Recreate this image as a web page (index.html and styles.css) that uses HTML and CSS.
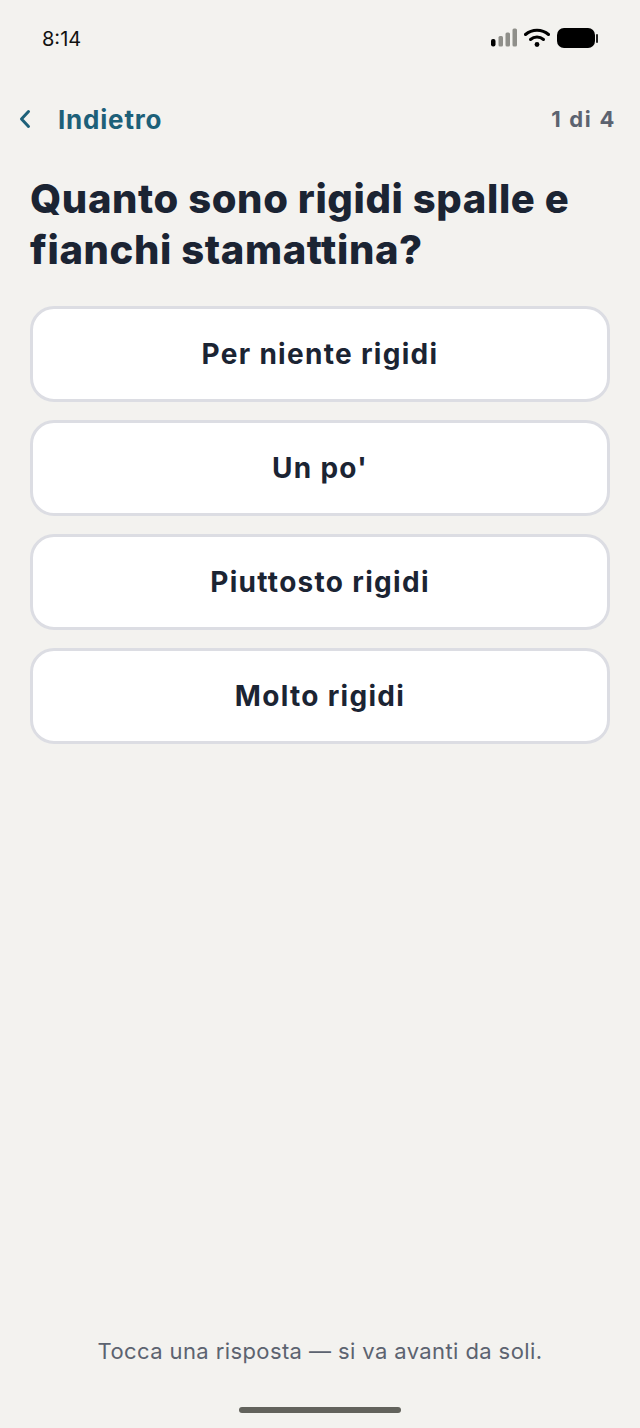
FILE: index.html
```html
<!DOCTYPE html>
<html lang="it">
<head>
    <meta charset="UTF-8">
    <meta name="viewport" content="width=device-width, initial-scale=1.0">
    <title>Domanda 1 di 4</title>
    <link rel="stylesheet" href="styles.css">
</head>
<body>
    <div class="screen">
        <!-- Status bar -->
        <div class="status-bar">
            <span class="clock">8:14</span>
            <div class="status-icons">
                <svg class="signal" width="26" height="20" viewBox="0 0 26 20">
                    <rect x="0" y="11" width="4.5" height="7.5" rx="2" fill="#000"/>
                    <rect x="7.5" y="8" width="4.5" height="10.5" rx="1.5" fill="#8f8f8a"/>
                    <rect x="14.5" y="4.5" width="4.5" height="14" rx="1.5" fill="#8f8f8a"/>
                    <rect x="21.5" y="0.5" width="4.5" height="18" rx="1.5" fill="#8f8f8a"/>
                </svg>
                <svg class="wifi" width="26" height="20" viewBox="0 0 26 20">
                    <path d="M1.5 6.5C8 0.8 18 0.8 24.5 6.5" fill="none" stroke="#000" stroke-width="3" stroke-linecap="round"/>
                    <path d="M6.5 11.5C10.2 8.3 15.8 8.3 19.5 11.5" fill="none" stroke="#000" stroke-width="3" stroke-linecap="round"/>
                    <circle cx="13" cy="16.5" r="2.4" fill="#000"/>
                </svg>
                <div class="battery">
                    <div class="battery-body"></div>
                    <div class="battery-tip"></div>
                </div>
            </div>
        </div>

        <!-- Header -->
        <div class="nav">
            <div class="back">
                <svg width="14" height="20" viewBox="0 0 14 20">
                    <path d="M10.5 2.5L3.5 10L10.5 17.5" fill="none" stroke="#1d6079" stroke-width="3" stroke-linecap="round" stroke-linejoin="round"/>
                </svg>
                <span class="back-label">Indietro</span>
            </div>
            <span class="step">1 di 4</span>
        </div>

        <h1 class="question">Quanto sono rigidi spalle e fianchi stamattina?</h1>

        <!-- Answers -->
        <div class="answers">
            <button class="answer">Per niente rigidi</button>
            <button class="answer">Un po'</button>
            <button class="answer">Piuttosto rigidi</button>
            <button class="answer">Molto rigidi</button>
        </div>

        <p class="hint">Tocca una risposta — si va avanti da soli.</p>
        <div class="home-bar"></div>
    </div>
</body>
</html>
```
FILE: styles.css
```css
:root {
    --bg: #f3f2ef;
    --ink: #1b2433;
    --teal: #1d6079;
    --muted: #5c6370;
    --border: #dcdde3;
}

* {
    margin: 0;
    padding: 0;
    box-sizing: border-box;
}

body {
    font-family: 'Inter', 'Noto Sans', Arial, sans-serif;
    background-color: var(--bg);
    color: var(--ink);
}

.screen {
    display: flex;
    flex-direction: column;
    height: 1428px;
    width: 640px;
    overflow: hidden;
}

.status-bar {
    display: flex;
    justify-content: space-between;
    align-items: center;
    height: 20px;
    margin-top: 28px;
    padding: 0 42px;
}

.clock {
    margin-top: 2px;
    font-size: 20px;
    color: #111;
}

.status-icons {
    display: flex;
    align-items: center;
    gap: 7px;
}

.battery {
    display: flex;
    align-items: center;
    gap: 1px;
}

.battery-body {
    width: 38px;
    height: 20px;
    background-color: #000;
    border-radius: 7px;
}

.battery-tip {
    width: 2px;
    height: 9px;
    background-color: #222;
    border-radius: 1px;
}

.nav {
    display: flex;
    justify-content: space-between;
    align-items: center;
    height: 30px;
    margin-top: 56px;
    padding: 0 25px 0 18px;
}

.back {
    display: flex;
    align-items: center;
    gap: 26px;
}

.back-label {
    font-size: 26px;
    font-weight: 700;
    letter-spacing: 0.8px;
    color: var(--teal);
}

.step {
    font-size: 22px;
    font-weight: 700;
    letter-spacing: 1.7px;
    margin-right: -1px;
    color: var(--muted);
}

.question {
    font-size: 40px;
    font-weight: 800;
    line-height: 51px;
    letter-spacing: 0.6px;
    margin-top: 39px;
    padding: 0 30px;
}

.answers {
    display: flex;
    flex-direction: column;
    gap: 18px;
    margin-top: 31px;
    padding: 0 30px;
}

.answer {
    height: 96px;
    font-family: inherit;
    font-size: 28px;
    font-weight: 700;
    letter-spacing: 1.3px;
    color: var(--ink);
    background-color: #fff;
    border: 3px solid var(--border);
    border-radius: 24px;
}

.hint {
    margin-top: auto;
    font-size: 22px;
    letter-spacing: 0.4px;
    color: var(--muted);
    text-align: center;
}

.home-bar {
    width: 162px;
    height: 6px;
    margin: 43px auto 15px;
    background-color: #62625c;
    border-radius: 3px;
}
```
